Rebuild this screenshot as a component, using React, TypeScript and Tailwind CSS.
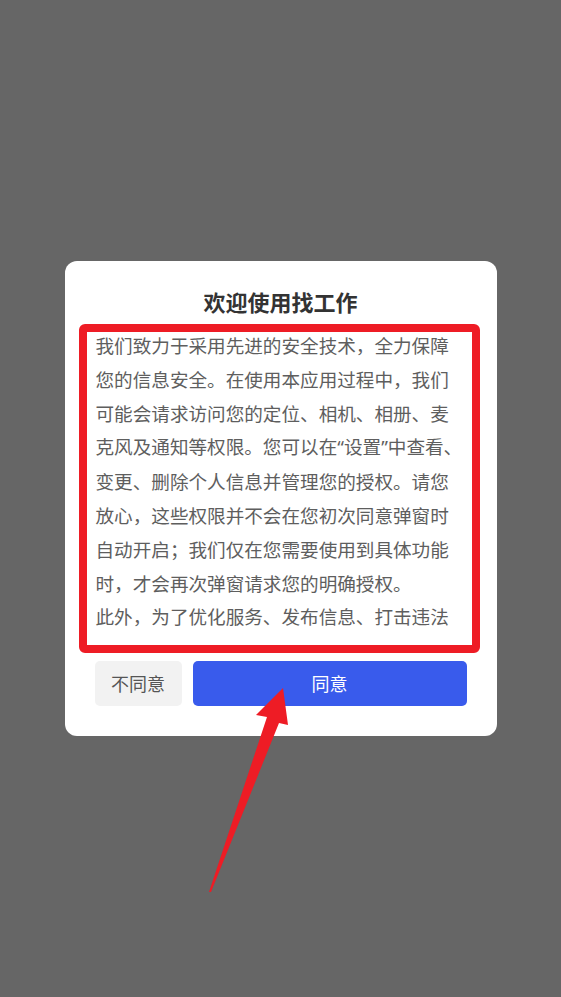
import React from "react";

const Q = ({ children }: { children: React.ReactNode }) => (
  <span style={{ fontFamily: '"Noto Sans", sans-serif' }}>{children}</span>
);

const lines: React.ReactNode[] = [
  "我们致力于采用先进的安全技术，全力保障",
  "您的信息安全。在使用本应用过程中，我们",
  "可能会请求访问您的定位、相机、相册、麦",
  <>
    克风及通知等权限。您可以在<Q>“</Q>设置<Q>”</Q>中查看、
  </>,
  "变更、删除个人信息并管理您的授权。请您",
  "放心，这些权限并不会在您初次同意弹窗时",
  "自动开启；我们仅在您需要使用到具体功能",
  "时，才会再次弹窗请求您的明确授权。",
  "此外，为了优化服务、发布信息、打击违法",
  "违规行为，我们会在您使用过程中收集必要",
  "的设备信息与日志信息。",
];

function Arrow() {
  return (
    <svg
      className="pointer-events-none absolute left-0 top-0"
      width="561"
      height="997"
      viewBox="0 0 561 997"
    >
      <polygon
        points="283,688 288,725 279,723 211,892 209,892 267,717 256,715"
        fill="#ee1c25"
      />
    </svg>
  );
}

export default function App() {
  return (
    <div
      className="relative flex h-[997px] w-full items-center justify-center bg-[#666666]"
      style={{ fontFamily: '"Noto Sans CJK SC", "Noto Sans", sans-serif' }}
    >
      <div className="flex w-[432px] flex-col rounded-[12px] bg-white px-[30px] pb-[30px] pt-[25px]">
        <h1 className="mb-[10px] text-center text-[22px] font-bold leading-[30px] text-[#333333]">
          欢迎使用找工作
        </h1>

        <div className="relative">
          <div className="mb-[10px] h-[310px] overflow-hidden pt-[2px] text-[18.6px] leading-[33.8px] text-[#5e5e5e]">
            {lines.map((l, i) => (
              <div key={i} className="whitespace-nowrap pl-px">
                {l}
              </div>
            ))}
          </div>
          {/* red highlight box */}
          <div className="pointer-events-none absolute -bottom-[7px] -left-[16px] -right-[13px] -top-[2px] rounded-[6px] border-[8px] border-[#ee1c25]" />
        </div>

        <div className="mt-[15px] flex gap-[11px]">
          <button className="h-[45px] w-[87px] rounded-[5px] bg-[#f2f2f2] text-[18px] leading-[45px] text-[#555555]">
            不同意
          </button>
          <button className="h-[45px] flex-1 rounded-[5px] bg-[#395bec] text-[18px] leading-[45px] text-white">
            同意
          </button>
        </div>
      </div>

      <Arrow />
    </div>
  );
}
